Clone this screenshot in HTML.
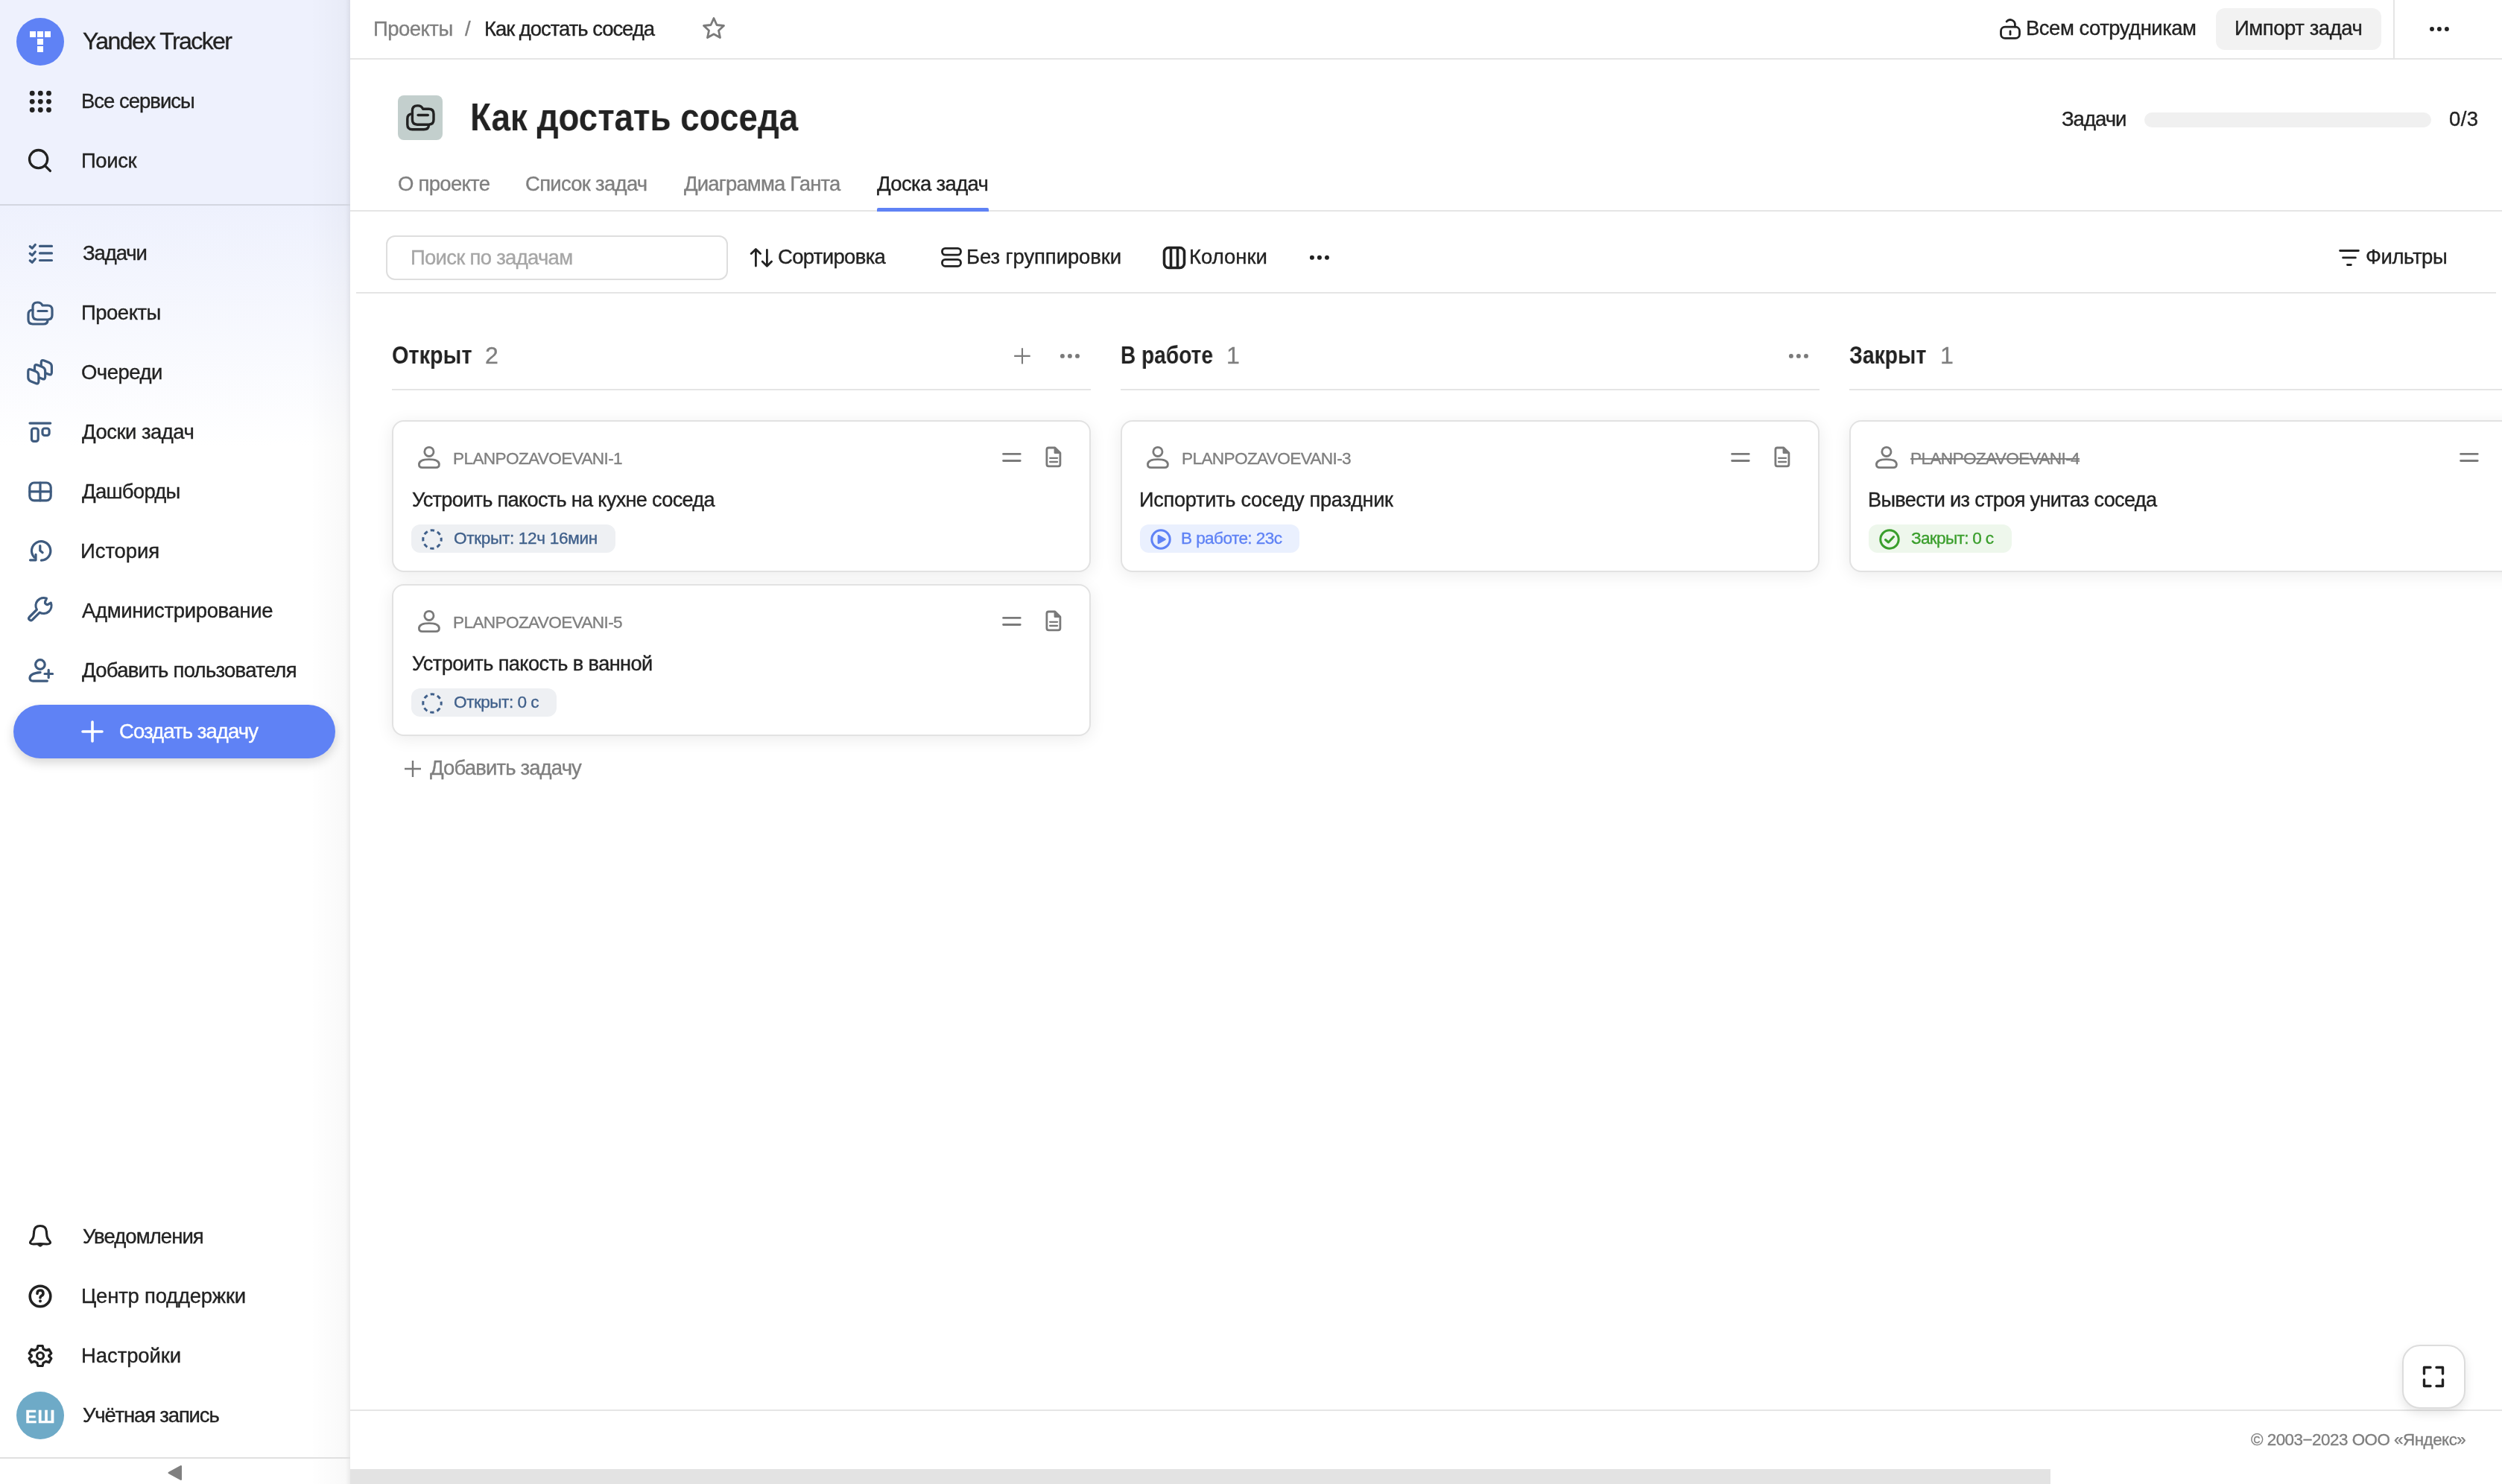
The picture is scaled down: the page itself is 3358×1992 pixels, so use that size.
<!DOCTYPE html>
<html><head><meta charset="utf-8"><title>Yandex Tracker</title>
<style>
html,body{margin:0;padding:0;background:#fff;width:3358px;height:1992px;overflow:hidden}
#root{position:relative;width:3358px;height:1992px;overflow:hidden;font-family:"Liberation Sans", sans-serif}
.t{position:absolute;white-space:nowrap;font-family:"Liberation Sans", sans-serif;-webkit-text-stroke:0.35px currentColor;will-change:transform}
svg{overflow:visible}
@media (max-width:1700px){html{zoom:0.5}}
</style></head><body><div id="root">
<div id="sb" style="position:absolute;left:0;top:0;width:470px;height:1992px;background:linear-gradient(#eef1fd 0px,#eef1fd 275px,#fff 600px,#fff 100%);"></div>
<div style="position:absolute;left:416px;top:0px;width:54px;height:1992px;background:linear-gradient(90deg,rgba(0,0,0,0) 0%,rgba(0,0,0,0.025) 85%,rgba(0,0,0,0.04) 100%)"></div>
<div style="position:absolute;left:464px;top:0px;width:6px;height:1992px;background:linear-gradient(90deg,rgba(0,0,0,0) 0%,rgba(0,0,0,0.045) 100%)"></div>
<svg style="position:absolute;left:22px;top:24px;" width="64" height="64" viewBox="0 0 64 64" fill="none"><circle cx="32" cy="32" r="32" fill="#5f82f5"/><rect x="18" y="18" width="8" height="8" fill="#fff"/><rect x="28" y="18" width="8" height="8" fill="#fff"/><rect x="38" y="18" width="8" height="8" fill="#fff"/><rect x="28" y="28" width="8" height="8" fill="#fff"/><rect x="28" y="38" width="8" height="8" fill="#fff"/></svg>
<div class="t" style="left:111.0px;top:33.9px;font-size:32px;line-height:42px;letter-spacing:-1.6px;color:#222;font-weight:normal;">Yandex Tracker</div>
<svg style="position:absolute;left:39px;top:120.5px;" width="31" height="31" viewBox="0 0 31 31" fill="none"><circle cx="4.2" cy="4.2" r="3.4" fill="#222"/><circle cx="4.2" cy="15.3" r="3.4" fill="#222"/><circle cx="4.2" cy="26.5" r="3.4" fill="#222"/><circle cx="15.3" cy="4.2" r="3.4" fill="#222"/><circle cx="15.3" cy="15.3" r="3.4" fill="#222"/><circle cx="15.3" cy="26.5" r="3.4" fill="#222"/><circle cx="26.5" cy="4.2" r="3.4" fill="#222"/><circle cx="26.5" cy="15.3" r="3.4" fill="#222"/><circle cx="26.5" cy="26.5" r="3.4" fill="#222"/></svg>
<div class="t" style="left:109.0px;top:118.0px;font-size:27.5px;line-height:36px;letter-spacing:-1.0px;color:#222;font-weight:normal;">Все сервисы</div>
<svg style="position:absolute;left:36px;top:198px;" width="36" height="36" viewBox="0 0 36 36" fill="none"><circle cx="15.6" cy="15.6" r="12.1" stroke="#222" stroke-width="3.3"/><path d="M24.3 24.3 L31.4 31.4" stroke="#222" stroke-width="3.3" stroke-linecap="round"/></svg>
<div class="t" style="left:108.8px;top:198.0px;font-size:27.5px;line-height:36px;letter-spacing:-0.4px;color:#222;font-weight:normal;">Поиск</div>
<div style="position:absolute;left:0px;top:274px;width:470px;height:2px;background:#d3d6e0"></div>
<div class="t" style="left:110.8px;top:321.5px;font-size:27.5px;line-height:36px;letter-spacing:-1.1px;color:#222;font-weight:normal;">Задачи</div>
<div class="t" style="left:108.8px;top:401.5px;font-size:27.5px;line-height:36px;letter-spacing:-0.5px;color:#222;font-weight:normal;">Проекты</div>
<div class="t" style="left:109.2px;top:481.5px;font-size:27.5px;line-height:36px;letter-spacing:-0.52px;color:#222;font-weight:normal;">Очереди</div>
<div class="t" style="left:110.2px;top:561.5px;font-size:27.5px;line-height:36px;letter-spacing:-0.52px;color:#222;font-weight:normal;">Доски задач</div>
<div class="t" style="left:110.2px;top:641.5px;font-size:27.5px;line-height:36px;letter-spacing:-0.73px;color:#222;font-weight:normal;">Дашборды</div>
<div class="t" style="left:108.2px;top:721.5px;font-size:27.5px;line-height:36px;letter-spacing:-0.07px;color:#222;font-weight:normal;">История</div>
<div class="t" style="left:110.2px;top:801.5px;font-size:27.5px;line-height:36px;letter-spacing:-0.35px;color:#222;font-weight:normal;">Администрирование</div>
<div class="t" style="left:110.3px;top:881.5px;font-size:27.5px;line-height:36px;letter-spacing:-0.74px;color:#222;font-weight:normal;">Добавить пользователя</div>
<svg style="position:absolute;left:36px;top:324px;" width="36" height="30" viewBox="0 0 36 30" fill="none"><path d="M4.2 6.8 L7.2 9.3 L11.3 4.5" stroke="#3e5b7f" stroke-width="3.2" stroke-linecap="round" stroke-linejoin="round"/><path d="M4.2 16.3 L7.2 18.8 L11.3 14" stroke="#3e5b7f" stroke-width="3.2" stroke-linecap="round" stroke-linejoin="round"/><path d="M4.2 25.8 L7.2 28.3 L11.3 23.5" stroke="#3e5b7f" stroke-width="3.2" stroke-linecap="round" stroke-linejoin="round"/><path d="M17.5 6.4 H33.5 M17.5 15.9 H33.5 M17.5 25.5 H33.5" stroke="#3e5b7f" stroke-width="3.2" stroke-linecap="round" stroke-linejoin="round"/></svg>
<svg style="position:absolute;left:34px;top:403px;" width="40" height="36" viewBox="0 0 40 36" fill="none"><path d="M10 13 Q4 13 4 19 V26 Q4 32 10 32 H24 Q30 32 30 27" stroke="#3e5b7f" stroke-width="3.2" stroke-linecap="round" stroke-linejoin="round"/><path d="M10 20 V9 Q10 3 16 3 H17 Q21 3 23 7 H30 Q36 7 36 13 V20 Q36 26 30 26 H16 Q10 26 10 20 Z" stroke="#3e5b7f" stroke-width="3.2" stroke-linecap="round" stroke-linejoin="round"/><path d="M17 14.5 H29" stroke="#3e5b7f" stroke-width="3.2" stroke-linecap="round" stroke-linejoin="round"/></svg>
<svg style="position:absolute;left:34px;top:480px;" width="40" height="40" viewBox="0 0 40 40" fill="none"><path d="M21.25 6.70 Q21.25 2.50 25.16 4.02 L31.49 6.48 Q35.40 8.00 35.40 12.20 L35.40 19.80 Q35.40 24.00 31.49 22.48 L25.16 20.02 Q21.25 18.50 21.25 14.30 Z" fill="#f8f9fd" stroke="#3e5b7f" stroke-width="3.2" stroke-linecap="round" stroke-linejoin="round"/><path d="M12.50 12.70 Q12.50 8.50 16.41 10.02 L22.74 12.48 Q26.65 14.00 26.65 18.20 L26.65 25.80 Q26.65 30.00 22.74 28.48 L16.41 26.02 Q12.50 24.50 12.50 20.30 Z" fill="#f8f9fd" stroke="#3e5b7f" stroke-width="3.2" stroke-linecap="round" stroke-linejoin="round"/><path d="M3.75 18.70 Q3.75 14.50 7.66 16.02 L13.99 18.48 Q17.90 20.00 17.90 24.20 L17.90 31.80 Q17.90 36.00 13.99 34.48 L7.66 32.02 Q3.75 30.50 3.75 26.30 Z" fill="#f9f9fd" stroke="#3e5b7f" stroke-width="3.2" stroke-linecap="round" stroke-linejoin="round"/></svg>
<svg style="position:absolute;left:36px;top:564px;" width="36" height="34" viewBox="0 0 36 34" fill="none"><path d="M4 4.1 H31.7" stroke="#3e5b7f" stroke-width="3.2" stroke-linecap="round" stroke-linejoin="round"/><rect x="6.5" y="11" width="8.7" height="17.4" rx="3" stroke="#3e5b7f" stroke-width="3.2" stroke-linecap="round" stroke-linejoin="round"/><rect x="21" y="11" width="9.1" height="9.5" rx="3" stroke="#3e5b7f" stroke-width="3.2" stroke-linecap="round" stroke-linejoin="round"/></svg>
<svg style="position:absolute;left:36px;top:644px;" width="36" height="32" viewBox="0 0 36 32" fill="none"><rect x="3.8" y="4" width="28.4" height="23.8" rx="6" stroke="#3e5b7f" stroke-width="3.2" stroke-linecap="round" stroke-linejoin="round"/><path d="M18 4 V27.8 M4 15.9 H32" stroke="#3e5b7f" stroke-width="3.2" stroke-linecap="round" stroke-linejoin="round"/></svg>
<svg style="position:absolute;left:36px;top:722px;" width="36" height="34" viewBox="0 0 36 34" fill="none"><path d="M19.5 30.1 A12.7 12.7 0 1 0 9.8 26" stroke="#3e5b7f" stroke-width="3.2" stroke-linecap="round" stroke-linejoin="round"/><path d="M12 22.3 V29.8 H4.5" stroke="#3e5b7f" stroke-width="3.2" stroke-linecap="round" stroke-linejoin="round"/><path d="M17.8 10.5 V17 L21.1 19.7" stroke="#3e5b7f" stroke-width="3.2" stroke-linecap="round" stroke-linejoin="round"/></svg>
<svg style="position:absolute;left:36px;top:801px;" width="36" height="36" viewBox="0 0 36 36" fill="none"><path d="M3.41 27.25 L13.41 17.25 A10.5 10.5 0 0 1 26.43 2.26 L24.60 6.60 A3 3 0 0 0 28.40 10.40 L32.24 8.07 A10.5 10.5 0 0 1 17.25 21.09 L7.25 31.09 A2.72 2.72 0 0 1 3.41 27.25 Z" stroke="#3e5b7f" stroke-width="3.2" stroke-linecap="round" stroke-linejoin="round"/></svg>
<svg style="position:absolute;left:36px;top:882px;" width="38" height="36" viewBox="0 0 38 36" fill="none"><circle cx="17.9" cy="10" r="6.3" stroke="#3e5b7f" stroke-width="3.2" stroke-linecap="round" stroke-linejoin="round"/><path d="M18.1 20.6 Q4.5 21.5 4 28 Q3.8 32.1 8.5 32.1 H27.4" stroke="#3e5b7f" stroke-width="3.2" stroke-linecap="round" stroke-linejoin="round"/><path d="M29.2 17.3 V27.7 M24 22.5 H34.6" stroke="#3e5b7f" stroke-width="3.2" stroke-linecap="round" stroke-linejoin="round"/></svg>
<div style="position:absolute;left:18px;top:946px;width:432px;height:72px;background:#5f82f5;border-radius:36px;box-shadow:0 6px 14px rgba(0,0,0,0.16)"></div>
<svg style="position:absolute;left:108px;top:966px;" width="32" height="32" viewBox="0 0 32 32" fill="none"><path d="M16 3 V29 M3 16 H29" stroke="#fff" stroke-width="3.6" stroke-linecap="round"/></svg>
<div class="t" style="left:159.8px;top:964.0px;font-size:27.5px;line-height:36px;letter-spacing:-0.92px;color:#fff;font-weight:normal;">Создать задачу</div>
<svg style="position:absolute;left:36px;top:1642px;" width="36" height="36" viewBox="0 0 36 36" fill="none"><path d="M18 3.5 Q25.8 3.5 26.3 11 L27 17.5 Q27.3 20 29.5 22.5 Q32.5 25.5 31 27 Q30 28 27 28 Q18 27 9 28 Q6 28 5 27 Q3.5 25.5 6.5 22.5 Q8.7 20 9 17.5 L9.7 11 Q10.2 3.5 18 3.5 Z" stroke="#222" stroke-width="3.1" stroke-linecap="round" stroke-linejoin="round"/><path d="M13.8 28 Q18 34.5 22.2 28 Z" fill="#222" stroke="#222" stroke-width="1" stroke-linejoin="round"/></svg>
<div class="t" style="left:111.0px;top:1642.0px;font-size:27.5px;line-height:36px;letter-spacing:-0.92px;color:#222;font-weight:normal;">Уведомления</div>
<svg style="position:absolute;left:36px;top:1722px;" width="36" height="36" viewBox="0 0 36 36" fill="none"><circle cx="18" cy="18" r="13.8" stroke="#222" stroke-width="3.6" stroke-linecap="round" stroke-linejoin="round"/><path d="M14 14.5 Q14 10 18 10 Q22 10 22 14 Q22 16.5 19.5 17.5 Q18 18.5 18 20" stroke="#222" stroke-width="3.6" stroke-linecap="round" stroke-linejoin="round"/><circle cx="18" cy="24.5" r="2" fill="#222"/></svg>
<div class="t" style="left:109.0px;top:1722.0px;font-size:27.5px;line-height:36px;letter-spacing:-0.23px;color:#222;font-weight:normal;">Центр поддержки</div>
<svg style="position:absolute;left:35px;top:1801px;" width="38" height="38" viewBox="0 0 38 38" fill="none"><g transform="translate(19 19) scale(0.9) translate(-19 -19)"><path d="M15.5 4 H22.5 L23.5 8.5 L27.5 10.8 L32 9.2 L35.5 15.3 L32 18.5 V19.5 L35.5 22.7 L32 28.8 L27.5 27.2 L23.5 29.5 L22.5 34 H15.5 L14.5 29.5 L10.5 27.2 L6 28.8 L2.5 22.7 L6 19.5 V18.5 L2.5 15.3 L6 9.2 L10.5 10.8 L14.5 8.5 Z" stroke="#222" stroke-width="3.6" stroke-linecap="round" stroke-linejoin="round"/><circle cx="19" cy="19" r="5" stroke="#222" stroke-width="3.6" stroke-linecap="round" stroke-linejoin="round"/></g></svg>
<div class="t" style="left:109.0px;top:1801.5px;font-size:27.5px;line-height:36px;letter-spacing:-0.09px;color:#222;font-weight:normal;">Настройки</div>
<svg style="position:absolute;left:22px;top:1868px;" width="64" height="64" viewBox="0 0 64 64" fill="none"><circle cx="32" cy="32" r="32" fill="#6eaac7"/></svg>
<div class="t" style="left:33.5px;top:1886.5px;font-size:23px;line-height:30px;letter-spacing:1.2px;color:#fff;font-weight:bold;">ЕШ</div>
<div class="t" style="left:111.0px;top:1882.0px;font-size:27.5px;line-height:36px;letter-spacing:-1.17px;color:#222;font-weight:normal;">Учётная запись</div>
<div style="position:absolute;left:0px;top:1956px;width:470px;height:2px;background:#e0e0e0"></div>
<svg style="position:absolute;left:224px;top:1966px;" width="22" height="22" viewBox="0 0 22 22" fill="none"><path d="M2.5 11 L19 2 V20 Z" fill="#808080" stroke="#808080" stroke-width="2" stroke-linejoin="round"/></svg>
<div style="position:absolute;left:470px;top:78px;width:2888px;height:2px;background:#e5e5e5"></div>
<div class="t" style="left:501.3px;top:21.0px;font-size:27.5px;line-height:36px;letter-spacing:-0.53px;color:#7f7f7f;font-weight:normal;">Проекты</div>
<div class="t" style="left:624.0px;top:21.0px;font-size:27.5px;line-height:36px;letter-spacing:0px;color:#7f7f7f;font-weight:normal;">/</div>
<div class="t" style="left:650.2px;top:21.0px;font-size:27.5px;line-height:36px;letter-spacing:-1.04px;color:#222;font-weight:normal;">Как достать соседа</div>
<svg style="position:absolute;left:940px;top:21px;" width="36" height="34" viewBox="0 0 36 34" fill="none"><path d="M18 3.5 L22 12.5 L31.5 13.5 L24.5 20 L26.5 29.5 L18 24.8 L9.5 29.5 L11.5 20 L4.5 13.5 L14 12.5 Z" stroke="#7a7a7a" stroke-width="2.8" stroke-linejoin="round"/></svg>
<svg style="position:absolute;left:2682px;top:23px;" width="32" height="32" viewBox="0 0 32 32" fill="none"><rect x="3.5" y="13.2" width="25" height="15.2" rx="5.5" stroke="#222" stroke-width="2.8" stroke-linecap="round" stroke-linejoin="round"/><path d="M22.4 13 V10 A6.4 6.4 0 0 0 11.1 5.9" stroke="#222" stroke-width="2.8" stroke-linecap="round" stroke-linejoin="round"/><path d="M16 18.9 V23.3" stroke="#222" stroke-width="2.8" stroke-linecap="round" stroke-linejoin="round"/></svg>
<div class="t" style="left:2718.6px;top:20.0px;font-size:27.5px;line-height:36px;letter-spacing:-0.5px;color:#222;font-weight:normal;">Всем сотрудникам</div>
<div style="position:absolute;left:2974px;top:11px;width:222px;height:56px;background:#f2f2f2;border-radius:12px"></div>
<div class="t" style="left:2998.5px;top:20.0px;font-size:27.5px;line-height:36px;letter-spacing:-0.45px;color:#222;font-weight:normal;">Импорт задач</div>
<div style="position:absolute;left:3212px;top:0px;width:2px;height:78px;background:#e5e5e5"></div>
<svg style="position:absolute;left:3258px;top:30px;" width="32" height="16" viewBox="0 0 32 16" fill="none"><circle cx="6" cy="9" r="2.95" fill="#222"/><circle cx="15.9" cy="9" r="2.95" fill="#222"/><circle cx="25.9" cy="9" r="2.95" fill="#222"/></svg>
<div style="position:absolute;left:534px;top:128px;width:60px;height:60px;background:#c3cfcd;border-radius:8px"></div>
<svg style="position:absolute;left:530px;top:124px;" width="70" height="70" viewBox="0 0 70 70" fill="none"><g transform="translate(12.4 14.6) scale(1.1)"><path d="M10 13 Q4 13 4 19 V26 Q4 32 10 32 H24 Q30 32 30 27" stroke="#222" stroke-width="3.1" stroke-linecap="round" stroke-linejoin="round"/><path d="M10 20 V9 Q10 3 16 3 H17 Q21 3 23 7 H30 Q36 7 36 13 V20 Q36 26 30 26 H16 Q10 26 10 20 Z" stroke="#222" stroke-width="3.1" stroke-linecap="round" stroke-linejoin="round"/><path d="M17 14.5 H29" stroke="#222" stroke-width="3.1" stroke-linecap="round" stroke-linejoin="round"/></g></svg>
<div class="t" style="left:630.8px;top:123.7px;font-size:51.3px;line-height:67px;letter-spacing:0px;color:#222;font-weight:bold;transform:scaleX(0.891);transform-origin:0 0;-webkit-text-stroke:0;">Как достать соседа</div>
<div class="t" style="left:2766.5px;top:142.0px;font-size:27.5px;line-height:36px;letter-spacing:-1.0px;color:#222;font-weight:normal;">Задачи</div>
<div style="position:absolute;left:2878px;top:151px;width:385px;height:20px;background:#f0f0f0;border-radius:10px"></div>
<div class="t" style="left:3287.0px;top:142.0px;font-size:27.5px;line-height:36px;letter-spacing:0.4px;color:#222;font-weight:normal;">0/3</div>
<div class="t" style="left:534.0px;top:229.0px;font-size:27.5px;line-height:36px;letter-spacing:-0.72px;color:#7f7f7f;font-weight:normal;">О проекте</div>
<div class="t" style="left:705.0px;top:229.0px;font-size:27.5px;line-height:36px;letter-spacing:-0.72px;color:#7f7f7f;font-weight:normal;">Список задач</div>
<div class="t" style="left:917.8px;top:229.0px;font-size:27.5px;line-height:36px;letter-spacing:-0.84px;color:#7f7f7f;font-weight:normal;">Диаграмма Ганта</div>
<div class="t" style="left:1177.4px;top:229.0px;font-size:27.5px;line-height:36px;letter-spacing:-0.66px;color:#222;font-weight:normal;">Доска задач</div>
<div style="position:absolute;left:470px;top:282px;width:2888px;height:2px;background:#e5e5e5"></div>
<div style="position:absolute;left:1177px;top:279px;width:150px;height:5px;background:#5f82f5;border-radius:2px 2px 0 0"></div>
<div style="position:absolute;left:518px;top:316px;width:459px;height:60px;box-sizing:border-box;border:2px solid #dedede;border-radius:12px;background:#fff"></div>
<div class="t" style="left:551.0px;top:328.0px;font-size:27.5px;line-height:36px;letter-spacing:-0.72px;color:#a6a6a6;font-weight:normal;">Поиск по задачам</div>
<svg style="position:absolute;left:1004px;top:330px;" width="36" height="32" viewBox="0 0 36 32" fill="none"><path d="M10.4 27 V5 M4.2 10.6 L10.4 4.4 L16.6 10.6" stroke="#222" stroke-width="2.8" stroke-linecap="round" stroke-linejoin="round"/><path d="M25.4 5.5 V27 M19.2 21 L25.4 27.2 L31.6 21" stroke="#222" stroke-width="2.8" stroke-linecap="round" stroke-linejoin="round"/></svg>
<div class="t" style="left:1043.8px;top:327.0px;font-size:27.5px;line-height:36px;letter-spacing:-0.67px;color:#222;font-weight:normal;">Сортировка</div>
<svg style="position:absolute;left:1260px;top:329px;" width="34" height="34" viewBox="0 0 34 34" fill="none"><rect x="4.5" y="4.3" width="25" height="8.8" rx="4" stroke="#222" stroke-width="2.8" stroke-linecap="round" stroke-linejoin="round"/><rect x="4.5" y="19.3" width="25" height="9" rx="4" stroke="#222" stroke-width="2.8" stroke-linecap="round" stroke-linejoin="round"/></svg>
<div class="t" style="left:1297.0px;top:327.0px;font-size:27.5px;line-height:36px;letter-spacing:-0.1px;color:#222;font-weight:normal;">Без группировки</div>
<svg style="position:absolute;left:1558px;top:328px;" width="36" height="36" viewBox="0 0 36 36" fill="none"><rect x="4.5" y="4.5" width="27" height="27" rx="6" stroke="#222" stroke-width="3.6" stroke-linecap="round" stroke-linejoin="round"/><path d="M13.5 5 V31 M22.5 5 V31" stroke="#222" stroke-width="3.6" stroke-linecap="round" stroke-linejoin="round"/></svg>
<div class="t" style="left:1596.0px;top:327.0px;font-size:27.5px;line-height:36px;letter-spacing:0px;color:#222;font-weight:normal;">Колонки</div>
<svg style="position:absolute;left:1755px;top:338px;" width="32" height="16" viewBox="0 0 32 16" fill="none"><circle cx="5.9" cy="7.8" r="3.0" fill="#222"/><circle cx="15.9" cy="7.8" r="3.0" fill="#222"/><circle cx="25.9" cy="7.8" r="3.0" fill="#222"/></svg>
<svg style="position:absolute;left:3136px;top:332px;" width="34" height="28" viewBox="0 0 34 28" fill="none"><path d="M4.6 4.5 H29.4 M8.6 13.9 H25.4 M14.5 23.5 H19.4" stroke="#222" stroke-width="2.8" stroke-linecap="round" stroke-linejoin="round"/></svg>
<div class="t" style="left:3174.5px;top:327.0px;font-size:27.5px;line-height:36px;letter-spacing:-0.4px;color:#222;font-weight:normal;">Фильтры</div>
<div style="position:absolute;left:478px;top:392px;width:2872px;height:2px;background:#e5e5e5"></div>
<div class="t" style="left:525.6px;top:455.8px;font-size:32.3px;line-height:42px;letter-spacing:0px;color:#222;font-weight:bold;transform:scaleX(0.894);transform-origin:0 0;-webkit-text-stroke:0;">Открыт</div>
<div style="position:absolute;left:526px;top:522px;width:938px;height:2px;background:#e5e5e5"></div>
<div class="t" style="left:1504.4px;top:455.8px;font-size:32.3px;line-height:42px;letter-spacing:0px;color:#222;font-weight:bold;transform:scaleX(0.869);transform-origin:0 0;-webkit-text-stroke:0;">В работе</div>
<div style="position:absolute;left:1504px;top:522px;width:938px;height:2px;background:#e5e5e5"></div>
<div class="t" style="left:2482.4px;top:455.8px;font-size:32.3px;line-height:42px;letter-spacing:0px;color:#222;font-weight:bold;transform:scaleX(0.879);transform-origin:0 0;-webkit-text-stroke:0;">Закрыт</div>
<div style="position:absolute;left:2482px;top:522px;width:938px;height:2px;background:#e5e5e5"></div>
<div class="t" style="left:651.0px;top:455.9px;font-size:32px;line-height:42px;letter-spacing:0px;color:#7f7f7f;font-weight:normal;">2</div>
<div class="t" style="left:1646.0px;top:455.9px;font-size:32px;line-height:42px;letter-spacing:0px;color:#7f7f7f;font-weight:normal;">1</div>
<div class="t" style="left:2604.0px;top:455.9px;font-size:32px;line-height:42px;letter-spacing:0px;color:#7f7f7f;font-weight:normal;">1</div>
<svg style="position:absolute;left:1358px;top:464px;" width="28" height="28" viewBox="0 0 28 28" fill="none"><path d="M14 3.3 V24.6 M3.2 13.9 H24.7" stroke="#7a7a7a" stroke-width="2.1"/></svg>
<svg style="position:absolute;left:1421px;top:470px;" width="30" height="16" viewBox="0 0 30 16" fill="none"><circle cx="4.9" cy="7.9" r="2.95" fill="#7a7a7a"/><circle cx="14.9" cy="7.9" r="2.95" fill="#7a7a7a"/><circle cx="25" cy="7.9" r="2.95" fill="#7a7a7a"/></svg>
<svg style="position:absolute;left:2399px;top:470px;" width="30" height="16" viewBox="0 0 30 16" fill="none"><circle cx="4.9" cy="7.9" r="2.95" fill="#7a7a7a"/><circle cx="14.9" cy="7.9" r="2.95" fill="#7a7a7a"/><circle cx="25" cy="7.9" r="2.95" fill="#7a7a7a"/></svg>
<div style="position:absolute;left:526px;top:564px;width:938px;height:204px;box-sizing:border-box;border:2px solid #e2e2e2;border-radius:16px;background:#fff;box-shadow:0 4px 22px rgba(0,0,0,0.08)"></div>
<svg style="position:absolute;left:559px;top:597px;" width="32" height="32" viewBox="0 0 32 32" fill="none"><circle cx="16.9" cy="9.4" r="6.1" stroke="#7a7a7a" stroke-width="2.8"/><path d="M3.4 26 Q4 19.6 16.9 19.6 Q29.8 19.6 30.4 26 Q30.6 30.6 26 30.6 H7.8 Q3.2 30.6 3.4 26 Z" stroke="#7a7a7a" stroke-width="2.8"/></svg>
<div class="t" style="left:607.5px;top:600.7px;font-size:22.6px;line-height:29px;letter-spacing:-0.63px;color:#7f7f7f;font-weight:normal;">PLANPOZAVOEVANI-1</div>
<div class="t" style="left:552.5px;top:653.1px;font-size:27.2px;line-height:35px;letter-spacing:-0.72px;color:#222;font-weight:normal;">Устроить пакость на кухне соседа</div>
<svg style="position:absolute;left:1342px;top:604px;" width="30" height="18" viewBox="0 0 30 18" fill="none"><path d="M4.6 5.4 H27.2 M4.6 14.5 H27.2" stroke="#7a7a7a" stroke-width="2.9" stroke-linecap="round"/></svg>
<svg style="position:absolute;left:1399px;top:596px;" width="28" height="34" viewBox="0 0 28 34" fill="none"><path d="M8.4 5 H16.9 L23.9 12 V27.3 Q23.9 29.8 21.4 29.8 H8.4 Q5.9 29.8 5.9 27.3 V7.5 Q5.9 5 8.4 5 Z" stroke="#7a7a7a" stroke-width="2.8" stroke-linejoin="round"/><path d="M16.9 5.5 V11.8 H23.4 Z" fill="#7a7a7a" stroke="#7a7a7a" stroke-width="2.6" stroke-linejoin="round"/><path d="M10.1 18.8 H20.1 M10.1 24 H20.1" stroke="#7a7a7a" stroke-width="2.3" stroke-linecap="round"/></svg>
<div style="position:absolute;left:551.5px;top:703.5px;width:274px;height:38px;background:#eef0f3;border-radius:12px"></div>
<svg style="position:absolute;left:565.5px;top:710.2px;" width="28" height="28" viewBox="0 0 28 28" fill="none"><circle cx="14" cy="14" r="12.2" stroke="#3f5f8a" stroke-width="3" stroke-dasharray="5.4 4.18" stroke-dashoffset="2.7"/></svg>
<div class="t" style="left:608.5px;top:708.0px;font-size:22.6px;line-height:29px;letter-spacing:-0.33px;color:#3f5f8a;font-weight:normal;">Открыт: 12ч 16мин</div>
<div style="position:absolute;left:526px;top:784px;width:938px;height:204px;box-sizing:border-box;border:2px solid #e2e2e2;border-radius:16px;background:#fff;box-shadow:0 4px 22px rgba(0,0,0,0.08)"></div>
<svg style="position:absolute;left:559px;top:817px;" width="32" height="32" viewBox="0 0 32 32" fill="none"><circle cx="16.9" cy="9.4" r="6.1" stroke="#7a7a7a" stroke-width="2.8"/><path d="M3.4 26 Q4 19.6 16.9 19.6 Q29.8 19.6 30.4 26 Q30.6 30.6 26 30.6 H7.8 Q3.2 30.6 3.4 26 Z" stroke="#7a7a7a" stroke-width="2.8"/></svg>
<div class="t" style="left:607.5px;top:820.7px;font-size:22.6px;line-height:29px;letter-spacing:-0.63px;color:#7f7f7f;font-weight:normal;">PLANPOZAVOEVANI-5</div>
<div class="t" style="left:552.5px;top:873.1px;font-size:27.2px;line-height:35px;letter-spacing:-0.6px;color:#222;font-weight:normal;">Устроить пакость в ванной</div>
<svg style="position:absolute;left:1342px;top:824px;" width="30" height="18" viewBox="0 0 30 18" fill="none"><path d="M4.6 5.4 H27.2 M4.6 14.5 H27.2" stroke="#7a7a7a" stroke-width="2.9" stroke-linecap="round"/></svg>
<svg style="position:absolute;left:1399px;top:816px;" width="28" height="34" viewBox="0 0 28 34" fill="none"><path d="M8.4 5 H16.9 L23.9 12 V27.3 Q23.9 29.8 21.4 29.8 H8.4 Q5.9 29.8 5.9 27.3 V7.5 Q5.9 5 8.4 5 Z" stroke="#7a7a7a" stroke-width="2.8" stroke-linejoin="round"/><path d="M16.9 5.5 V11.8 H23.4 Z" fill="#7a7a7a" stroke="#7a7a7a" stroke-width="2.6" stroke-linejoin="round"/><path d="M10.1 18.8 H20.1 M10.1 24 H20.1" stroke="#7a7a7a" stroke-width="2.3" stroke-linecap="round"/></svg>
<div style="position:absolute;left:551.5px;top:923.5px;width:195px;height:38px;background:#eef0f3;border-radius:12px"></div>
<svg style="position:absolute;left:565.5px;top:930.2px;" width="28" height="28" viewBox="0 0 28 28" fill="none"><circle cx="14" cy="14" r="12.2" stroke="#3f5f8a" stroke-width="3" stroke-dasharray="5.4 4.18" stroke-dashoffset="2.7"/></svg>
<div class="t" style="left:608.5px;top:928.0px;font-size:22.6px;line-height:29px;letter-spacing:-0.51px;color:#3f5f8a;font-weight:normal;">Открыт: 0 с</div>
<div style="position:absolute;left:1504px;top:564px;width:938px;height:204px;box-sizing:border-box;border:2px solid #e2e2e2;border-radius:16px;background:#fff;box-shadow:0 4px 22px rgba(0,0,0,0.08)"></div>
<svg style="position:absolute;left:1537px;top:597px;" width="32" height="32" viewBox="0 0 32 32" fill="none"><circle cx="16.9" cy="9.4" r="6.1" stroke="#7a7a7a" stroke-width="2.8"/><path d="M3.4 26 Q4 19.6 16.9 19.6 Q29.8 19.6 30.4 26 Q30.6 30.6 26 30.6 H7.8 Q3.2 30.6 3.4 26 Z" stroke="#7a7a7a" stroke-width="2.8"/></svg>
<div class="t" style="left:1585.5px;top:600.7px;font-size:22.6px;line-height:29px;letter-spacing:-0.63px;color:#7f7f7f;font-weight:normal;">PLANPOZAVOEVANI-3</div>
<div class="t" style="left:1528.8px;top:653.1px;font-size:27.2px;line-height:35px;letter-spacing:-0.29px;color:#222;font-weight:normal;">Испортить соседу праздник</div>
<svg style="position:absolute;left:2320px;top:604px;" width="30" height="18" viewBox="0 0 30 18" fill="none"><path d="M4.6 5.4 H27.2 M4.6 14.5 H27.2" stroke="#7a7a7a" stroke-width="2.9" stroke-linecap="round"/></svg>
<svg style="position:absolute;left:2377px;top:596px;" width="28" height="34" viewBox="0 0 28 34" fill="none"><path d="M8.4 5 H16.9 L23.9 12 V27.3 Q23.9 29.8 21.4 29.8 H8.4 Q5.9 29.8 5.9 27.3 V7.5 Q5.9 5 8.4 5 Z" stroke="#7a7a7a" stroke-width="2.8" stroke-linejoin="round"/><path d="M16.9 5.5 V11.8 H23.4 Z" fill="#7a7a7a" stroke="#7a7a7a" stroke-width="2.6" stroke-linejoin="round"/><path d="M10.1 18.8 H20.1 M10.1 24 H20.1" stroke="#7a7a7a" stroke-width="2.3" stroke-linecap="round"/></svg>
<div style="position:absolute;left:1529.5px;top:703.5px;width:214px;height:38px;background:#eaf0fe;border-radius:12px"></div>
<svg style="position:absolute;left:1543.5px;top:710.2px;" width="28" height="28" viewBox="0 0 28 28" fill="none"><circle cx="14" cy="14" r="12.2" stroke="#5f82f5" stroke-width="3"/><path d="M10.7 9 L19.7 14 L10.7 19 Z" fill="#5f82f5" stroke="#5f82f5" stroke-width="2.2" stroke-linejoin="round"/></svg>
<div class="t" style="left:1584.5px;top:708.0px;font-size:22.6px;line-height:29px;letter-spacing:-0.6px;color:#5f82f5;font-weight:normal;">В работе: 23с</div>
<div style="position:absolute;left:2482px;top:564px;width:938px;height:204px;box-sizing:border-box;border:2px solid #e2e2e2;border-radius:16px;background:#fff;box-shadow:0 4px 22px rgba(0,0,0,0.08)"></div>
<svg style="position:absolute;left:2515px;top:597px;" width="32" height="32" viewBox="0 0 32 32" fill="none"><circle cx="16.9" cy="9.4" r="6.1" stroke="#7a7a7a" stroke-width="2.8"/><path d="M3.4 26 Q4 19.6 16.9 19.6 Q29.8 19.6 30.4 26 Q30.6 30.6 26 30.6 H7.8 Q3.2 30.6 3.4 26 Z" stroke="#7a7a7a" stroke-width="2.8"/></svg>
<div class="t" style="left:2563.5px;top:600.7px;font-size:22.6px;line-height:29px;letter-spacing:-0.63px;color:#7f7f7f;font-weight:normal;text-decoration:line-through;text-decoration-thickness:2px;">PLANPOZAVOEVANI-4</div>
<div class="t" style="left:2507.1px;top:653.1px;font-size:27.2px;line-height:35px;letter-spacing:-0.7px;color:#222;font-weight:normal;">Вывести из строя унитаз соседа</div>
<svg style="position:absolute;left:3298px;top:604px;" width="30" height="18" viewBox="0 0 30 18" fill="none"><path d="M4.6 5.4 H27.2 M4.6 14.5 H27.2" stroke="#7a7a7a" stroke-width="2.9" stroke-linecap="round"/></svg>
<svg style="position:absolute;left:3355px;top:596px;" width="28" height="34" viewBox="0 0 28 34" fill="none"><path d="M8.4 5 H16.9 L23.9 12 V27.3 Q23.9 29.8 21.4 29.8 H8.4 Q5.9 29.8 5.9 27.3 V7.5 Q5.9 5 8.4 5 Z" stroke="#7a7a7a" stroke-width="2.8" stroke-linejoin="round"/><path d="M16.9 5.5 V11.8 H23.4 Z" fill="#7a7a7a" stroke="#7a7a7a" stroke-width="2.6" stroke-linejoin="round"/><path d="M10.1 18.8 H20.1 M10.1 24 H20.1" stroke="#7a7a7a" stroke-width="2.3" stroke-linecap="round"/></svg>
<div style="position:absolute;left:2507.5px;top:703.5px;width:192px;height:38px;background:#eef7ec;border-radius:12px"></div>
<svg style="position:absolute;left:2521.5px;top:710.2px;" width="28" height="28" viewBox="0 0 28 28" fill="none"><circle cx="14" cy="14" r="12.2" stroke="#3a9e2c" stroke-width="3"/><path d="M8.5 14.5 L12.5 18 L19.5 10.5" stroke="#3a9e2c" stroke-width="3" stroke-linecap="round" stroke-linejoin="round"/></svg>
<div class="t" style="left:2564.5px;top:708.0px;font-size:22.6px;line-height:29px;letter-spacing:-0.68px;color:#3a9e2c;font-weight:normal;">Закрыт: 0 с</div>
<svg style="position:absolute;left:541px;top:1019.2px;" width="26" height="26" viewBox="0 0 26 26" fill="none"><path d="M13 2 V24 M2 13 H24" stroke="#7a7a7a" stroke-width="2.4"/></svg>
<div class="t" style="left:576.5px;top:1013.0px;font-size:27.5px;line-height:36px;letter-spacing:-0.86px;color:#7f7f7f;font-weight:normal;">Добавить задачу</div>
<div style="position:absolute;left:470px;top:1892px;width:2888px;height:2px;background:#e5e5e5"></div>
<div style="position:absolute;left:3224px;top:1805px;width:85px;height:86px;box-sizing:border-box;border:2px solid #dcdcdc;border-radius:24px;background:#fff;box-shadow:0 6px 14px rgba(0,0,0,0.10)"></div>
<svg style="position:absolute;left:3250px;top:1832px;" width="32" height="32" viewBox="0 0 32 32" fill="none"><path d="M3.5 12 V3.5 H12 M20 3.5 H28.5 V12 M28.5 20 V28.5 H20 M12 28.5 H3.5 V20" stroke="#222" stroke-width="3.4" stroke-linecap="round" stroke-linejoin="round"/></svg>
<div class="t" style="left:3021.0px;top:1917.7px;font-size:22.4px;line-height:29px;letter-spacing:-0.5px;color:#7f7f7f;font-weight:normal;">© 2003−2023 ООО «Яндекс»</div>
<div style="position:absolute;left:470px;top:1972px;width:2282px;height:20px;background:#e3e3e3"></div>
</div>
<script>(function(){var w=window.innerWidth;if(w&&Math.abs(w-3358)>2){document.documentElement.style.zoom=(w/3358);}})();</script>
</body></html>
